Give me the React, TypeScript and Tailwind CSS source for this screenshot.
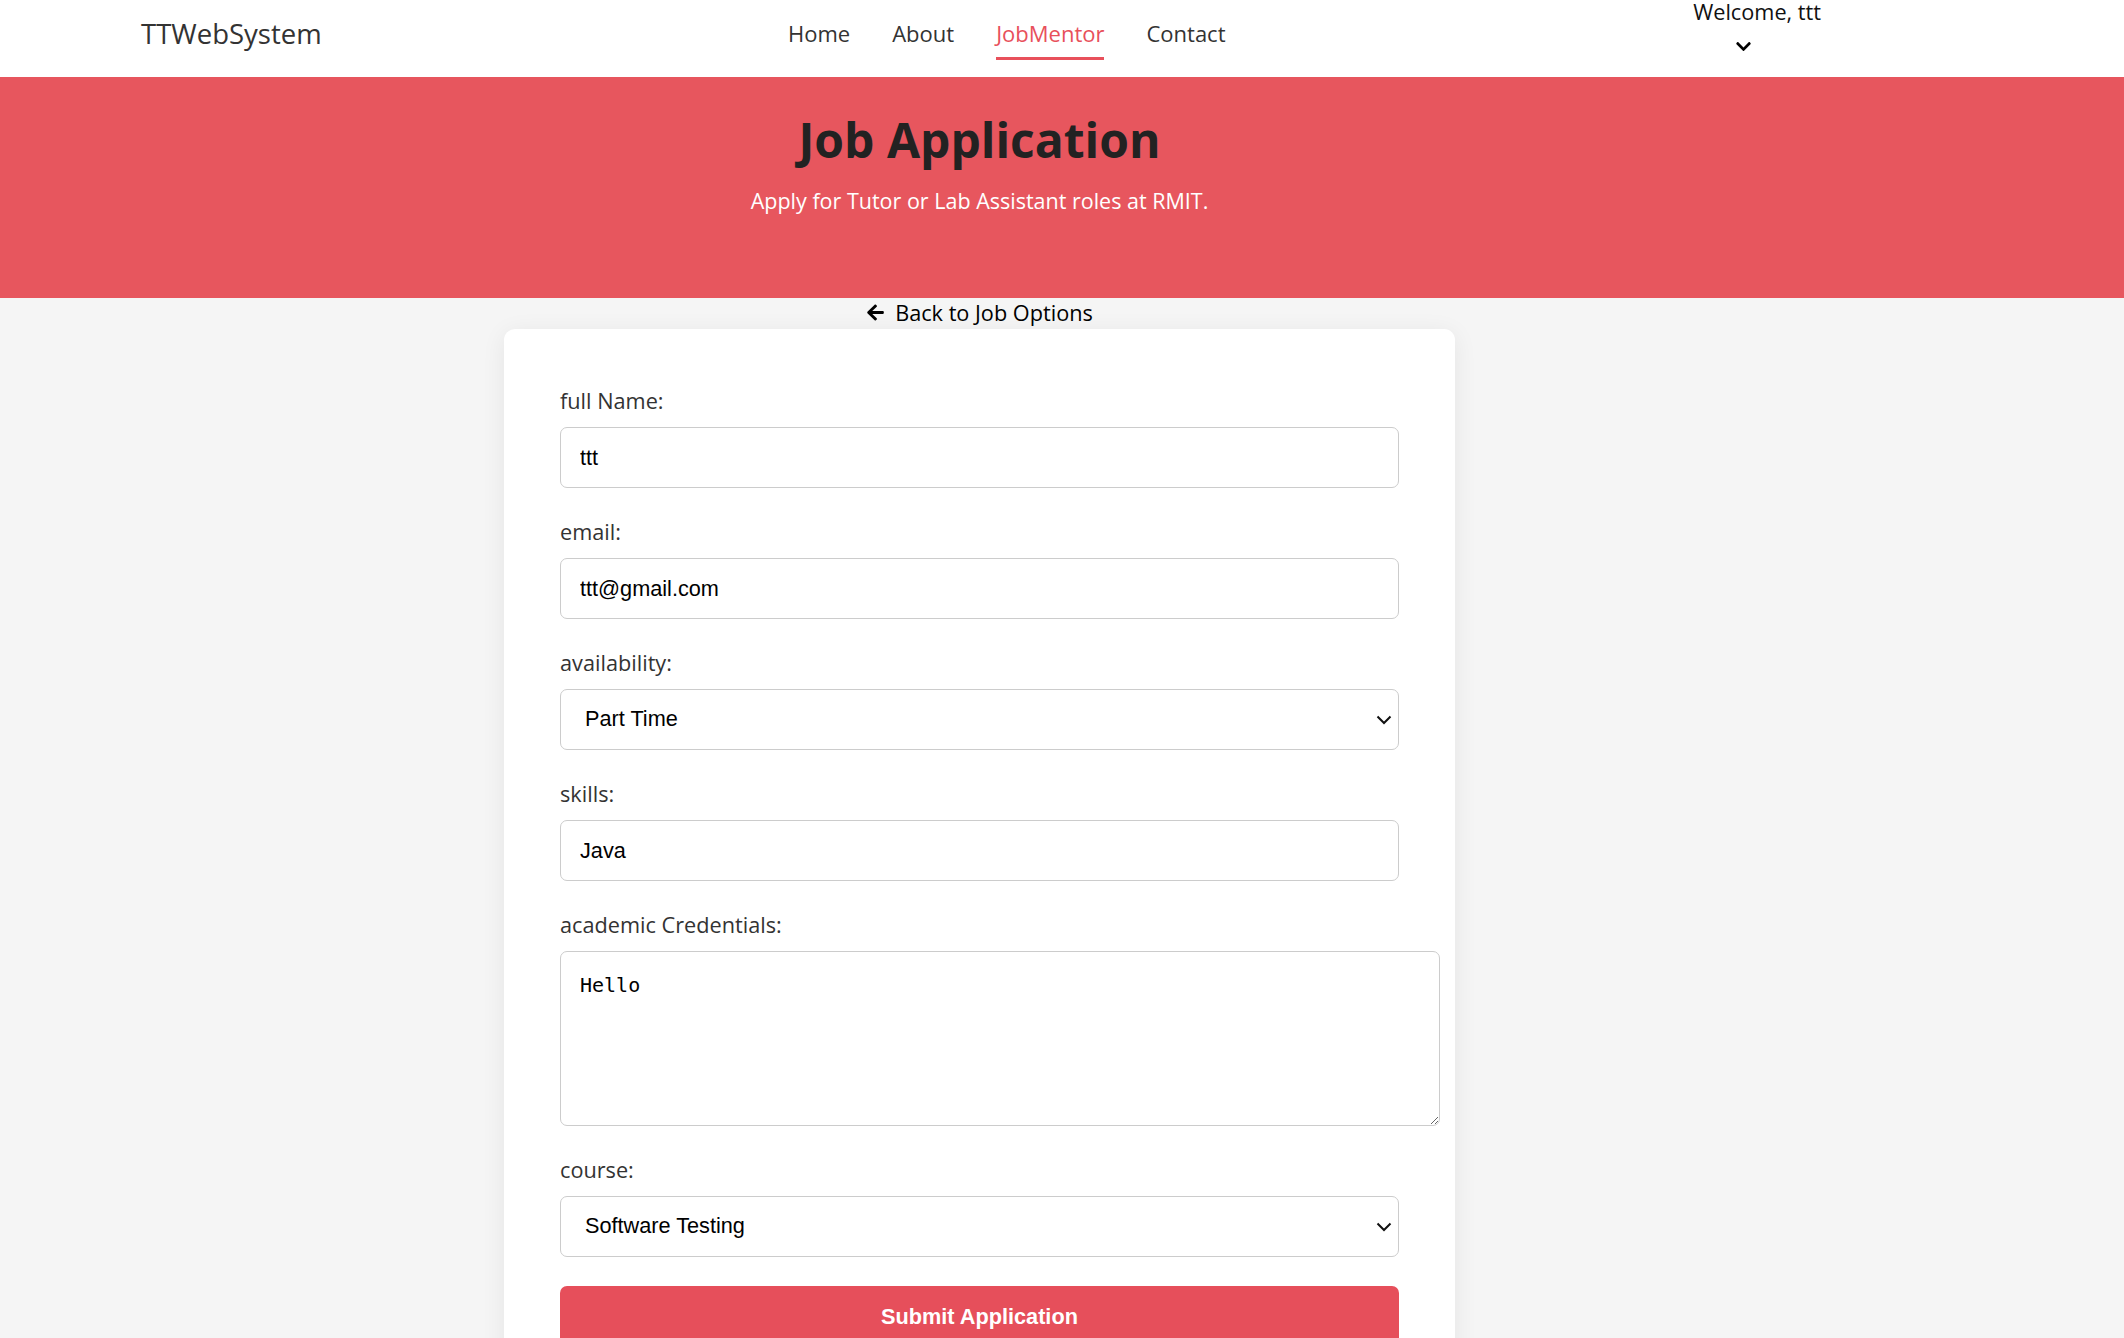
import { FaArrowLeft, FaChevronDown } from 'react-icons/fa';

const inputClass =
  "block w-full h-[61px] border border-[#cccccc] rounded-[7px] bg-white px-[19px] text-[21.7px] text-black font-['Liberation_Sans',Arial,sans-serif] outline-none";

function Field({ label, children }: { label: string; children: React.ReactNode }) {
  return (
    <div className="mb-[29px]">
      <label className="block mb-[11px] text-[21.7px] leading-[30px] font-medium text-[#333]">{label}</label>
      {children}
    </div>
  );
}

function Select({ value, options }: { value: string; options: string[] }) {
  return (
    <div className="relative">
      <select className={inputClass + ' appearance-none pl-[24px]'} defaultValue={value}>
        {options.map((o) => (
          <option key={o}>{o}</option>
        ))}
      </select>
      <svg
        className="pointer-events-none absolute right-[7px] top-1/2 -translate-y-1/2 w-[16px] h-[10px]"
        viewBox="0 0 16 10"
        fill="none"
        stroke="#111"
        strokeWidth="2"
      >
        <path d="M1.5 1.5 8 8l6.5-6.5" />
      </svg>
    </div>
  );
}

export default function App() {
  return (
    <div className="min-h-screen bg-[#f5f5f5] font-['Open_Sans',sans-serif]">
      {/* top nav */}
      <nav className="flex h-[77px] bg-white">
        <div className="w-[788px] pl-[141px] pt-[15px] text-[27.5px] leading-[38px] font-medium text-[#333]">
          TTWebSystem
        </div>
        <ul className="flex gap-[42px] pt-[18px] text-[22px] leading-[30px] text-[#333]">
          <li><a className="block pb-[9px] border-b-[3px] border-transparent">Home</a></li>
          <li><a className="block pb-[9px] border-b-[3px] border-transparent">About</a></li>
          <li><a className="block pb-[9px] border-b-[3px] border-[#e8505b] text-[#e8505b]">JobMentor</a></li>
          <li><a className="block pb-[9px] border-b-[3px] border-transparent">Contact</a></li>
        </ul>
        <div className="ml-auto mr-[303px] flex flex-col items-center">
          <span className="text-[21.7px] leading-[24px] text-[#111]">Welcome, ttt</span>
          <FaChevronDown className="mt-[14px] mr-[28px] w-[17px] h-[17px] text-black" />
        </div>
      </nav>

      {/* hero */}
      <section className="h-[221px] bg-[#e7565e]">
        <div className="w-[1959px] pt-[34px] text-center">
          <h1 className="text-[48px] leading-[58px] font-bold text-[#222]">Job Application</h1>
          <p className="mt-[16px] text-[21.5px] leading-[32px] text-white">
            Apply for Tutor or Lab Assistant roles at RMIT.
          </p>
        </div>
      </section>

      <div className="w-[1959px]">
        <div className="flex justify-center">
          <a className="flex items-center gap-[10px] h-[31px] text-[21.7px] text-black">
            <FaArrowLeft className="w-[19px] h-[19px] -mt-[3px]" />
            Back to Job Options
          </a>
        </div>

        <div className="mx-auto w-[951px] rounded-[11px] bg-white px-[56px] pt-[57px] pb-[56px] shadow-[0_4px_24px_rgba(0,0,0,0.07)]">
          <Field label="full Name:">
            <input className={inputClass} defaultValue="ttt" />
          </Field>
          <Field label="email:">
            <input className={inputClass} defaultValue="ttt@gmail.com" />
          </Field>
          <Field label="availability:">
            <Select value="Part Time" options={['Full Time', 'Part Time', 'Casual']} />
          </Field>
          <Field label="skills:">
            <input className={inputClass} defaultValue="Java" />
          </Field>
          <Field label="academic Credentials:">
            <textarea
              className="block w-[880px] h-[175px] border border-[#cccccc] rounded-[7px] bg-white px-[19px] py-[18px] text-[20px] text-black font-['DejaVu_Sans_Mono',monospace] outline-none"
              defaultValue="Hello"
            />
          </Field>
          <Field label="course:">
            <Select value="Software Testing" options={['Software Testing', 'Programming Studio', 'Web Development']} />
          </Field>
          <button className="block w-full h-[62px] rounded-[7px] bg-[#e64f5b] text-white text-[21.7px] font-bold font-['Liberation_Sans',Arial,sans-serif]">
            Submit Application
          </button>
        </div>
      </div>
    </div>
  );
}
